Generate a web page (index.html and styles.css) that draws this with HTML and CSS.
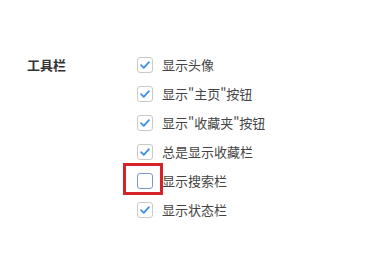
FILE: index.html
```html
<!DOCTYPE html>
<html lang="zh-CN">
  <head>
    <meta charset="UTF-8">
    <title>工具栏</title>
    <link rel="stylesheet" href="styles.css">
  </head>

  <body>
    <div class="settings">
      <div class="section-title">工具栏</div>
      <div class="options">
        <label class="option">
          <span class="checkbox checked">
            <svg viewBox="0 0 16 16"><path d="M3.5 8.2 L6.6 11.2 L12.5 4.8" /></svg>
          </span>
          <span class="option-text">显示头像</span>
        </label>
        <label class="option">
          <span class="checkbox checked">
            <svg viewBox="0 0 16 16"><path d="M3.5 8.2 L6.6 11.2 L12.5 4.8" /></svg>
          </span>
          <span class="option-text">显示"主页"按钮</span>
        </label>
        <label class="option">
          <span class="checkbox checked">
            <svg viewBox="0 0 16 16"><path d="M3.5 8.2 L6.6 11.2 L12.5 4.8" /></svg>
          </span>
          <span class="option-text">显示"收藏夹"按钮</span>
        </label>
        <label class="option">
          <span class="checkbox checked">
            <svg viewBox="0 0 16 16"><path d="M3.5 8.2 L6.6 11.2 L12.5 4.8" /></svg>
          </span>
          <span class="option-text">总是显示收藏栏</span>
        </label>
        <label class="option">
          <span class="checkbox focused">
            <span class="highlight"></span>
          </span>
          <span class="option-text">显示搜索栏</span>
        </label>
        <label class="option">
          <span class="checkbox checked">
            <svg viewBox="0 0 16 16"><path d="M3.5 8.2 L6.6 11.2 L12.5 4.8" /></svg>
          </span>
          <span class="option-text">显示状态栏</span>
        </label>
      </div>
    </div>
  </body>

</html>
```

FILE: styles.css
```css
* {
  box-sizing: border-box;
  margin: 0;
  padding: 0;
}

body {
  font-family: "Noto Sans CJK SC", "Noto Sans", sans-serif;
  background: white;
  width: 366px;
  height: 256px;
  overflow: hidden;
}

.settings {
  display: flex;
  padding: 50px 0 0 27px;
}

.section-title {
  width: 110px;
  height: 29px;
  line-height: 29px;
  font-size: 13px;
  font-weight: bold;
  color: #333;
}

.options {
  display: flex;
  flex-direction: column;
}

.option {
  display: flex;
  align-items: center;
  height: 29px;
  gap: 9px;
}

.checkbox {
  position: relative;
  display: flex;
  align-items: center;
  justify-content: center;
  width: 16px;
  height: 16px;
  border: 1px solid #c9c9c9;
  border-radius: 3px;
  background: white;
}

.checkbox svg {
  width: 14px;
  height: 14px;
  fill: none;
  stroke: #3d8ee6;
  stroke-width: 2;
  stroke-linecap: round;
  stroke-linejoin: round;
}

.checkbox.focused {
  border-color: #7a98d0;
}

.highlight {
  position: absolute;
  left: -15px;
  top: -11px;
  width: 40px;
  height: 32px;
  border: 3px solid #d8222b;
}

.option-text {
  font-size: 13px;
  color: #444;
  line-height: 1;
}
```
